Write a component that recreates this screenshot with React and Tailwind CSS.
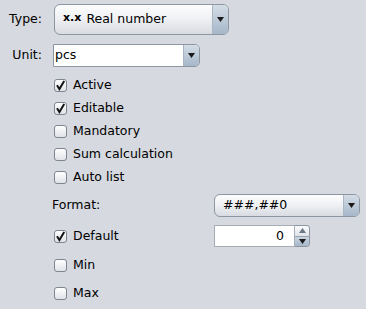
import React from "react";

const font = { fontFamily: '"DejaVu Sans", sans-serif' };

function Arrow({ up = false }) {
  return (
    <svg width="7" height="5" viewBox="0 0 7 5" className="block">
      {up ? (
        <polygon points="0,5 7,5 3.5,0" fill="#6f7780" />
      ) : (
        <polygon points="0,0 7,0 3.5,5" fill="#1a1a1a" />
      )}
    </svg>
  );
}

function CheckBox({ checked }) {
  return (
    <div className="w-[13px] h-[13px] rounded-[3px] border border-[#7f858e] bg-gradient-to-b from-[#ffffff] to-[#dfe2e7] flex items-center justify-center shrink-0">
      {checked && (
        <svg width="11" height="11" viewBox="0 0 11 11">
          <path d="M2 5.3 L4.4 9 L9.2 1" stroke="#141414" strokeWidth="2" fill="none" strokeLinejoin="miter" />
        </svg>
      )}
    </div>
  );
}

function CheckRow({ label, checked, className = "h-[23px]" }) {
  return (
    <div className={`flex items-center pl-[54px] ${className}`}>
      <CheckBox checked={checked} />
      <span className="ml-[6px] text-[12.5px] text-black">{label}</span>
    </div>
  );
}

function ArrowPart({ className = "" }) {
  return (
    <div className={`w-[16px] h-full flex items-center justify-center border-l border-[#aab6c4] bg-gradient-to-b from-[#d4dde7] to-[#a6b7c9] ${className}`}>
      <Arrow />
    </div>
  );
}

export default function App() {
  return (
    <div className="w-[366px] h-[309px] bg-[#d6d9df] text-black overflow-hidden pt-[4px]" style={font}>
      {/* Type */}
      <div className="flex items-center h-[31px]">
        <div className="w-[42px] text-right text-[12.5px]">Type:</div>
        <div className="ml-[12px] w-[175px] h-full flex rounded-[6px] border border-[#8d96a1] overflow-hidden bg-gradient-to-b from-[#fdfdfe] via-[#eef0f3] to-[#d8dbe1]">
          <div className="flex-1 flex items-center pl-[8px]">
            <span className="font-bold text-[11px] -mt-[2px]">x.x</span>
            <span className="ml-[5px] text-[12.5px]">Real number</span>
          </div>
          <ArrowPart />
        </div>
      </div>

      {/* Unit */}
      <div className="flex items-center h-[23px] mt-[9px]">
        <div className="w-[42px] text-right text-[12.5px]">Unit:</div>
        <div className="ml-[11px] w-[147px] h-full flex rounded-r-[5px] border border-[#8d96a1] overflow-hidden bg-white">
          <div className="flex-1 flex items-center pl-[1px] text-[12.5px]">pcs</div>
          <ArrowPart />
        </div>
      </div>

      <div className="mt-[7px]">
        <CheckRow label="Active" checked />
        <CheckRow label="Editable" checked />
        <CheckRow label="Mandatory" />
        <CheckRow label="Sum calculation" />
        <CheckRow label="Auto list" />
      </div>

      {/* Format */}
      <div className="flex items-center h-[23px] mt-[5px]">
        <div className="pl-[52px] w-[214px] text-[12.5px]">Format:</div>
        <div className="w-[146px] h-full flex rounded-[6px] border border-[#8d96a1] overflow-hidden bg-gradient-to-b from-[#fdfdfe] via-[#eef0f3] to-[#d8dbe1]">
          <div className="flex-1 flex items-center pl-[8px] text-[12.5px]">###,##0</div>
          <ArrowPart />
        </div>
      </div>

      {/* Default */}
      <div className="flex items-center h-[24px] mt-[7px]">
        <div className="w-[214px]">
          <CheckRow label="Default" checked className="h-[24px]" />
        </div>
        <div className="w-[96px] h-[22px] flex">
          <div className="flex-1 flex items-center justify-end pr-[10px] bg-white border border-[#a7adb5] text-[12.5px]">0</div>
          <div className="w-[15px] h-full flex flex-col rounded-r-[4px] border border-l-0 border-[#8d96a1] overflow-hidden">
            <div className="flex-1 flex items-center justify-center bg-gradient-to-b from-[#fbfcfd] to-[#dfe3e8] border-b border-[#9aa5b1]">
              <Arrow up />
            </div>
            <div className="flex-1 flex items-center justify-center bg-gradient-to-b from-[#c9d4df] to-[#a6b7c9]">
              <Arrow />
            </div>
          </div>
        </div>
      </div>

      <CheckRow label="Min" className="h-[22px] mt-[6px]" />
      <CheckRow label="Max" className="h-[22px] mt-[6px]" />
    </div>
  );
}
